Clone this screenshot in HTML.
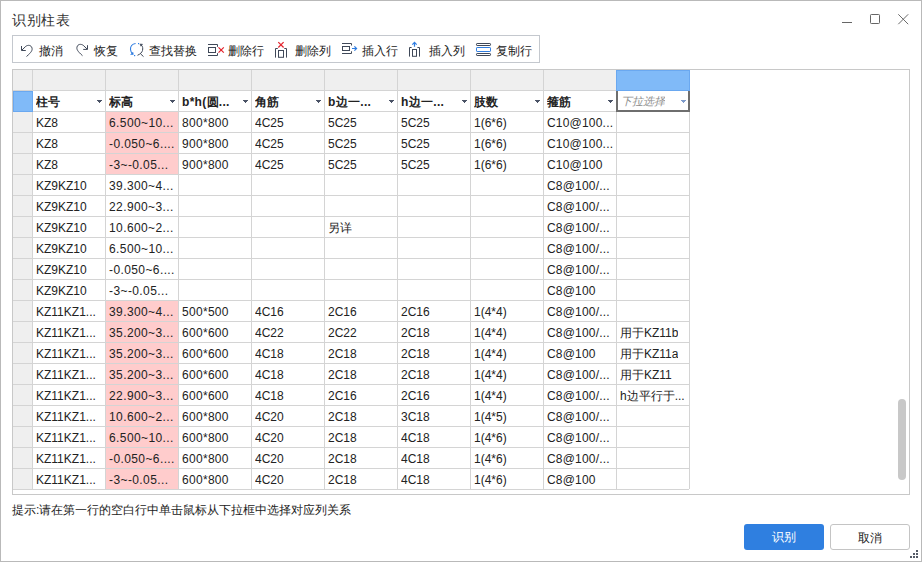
<!DOCTYPE html>
<html><head><meta charset="utf-8"><style>
*{margin:0;padding:0;box-sizing:border-box}
html,body{width:922px;height:562px;overflow:hidden;background:#fff}
body{position:relative;font-family:"Liberation Sans",sans-serif;color:#222;font-size:12px}
.a{position:absolute}
.win{position:absolute;left:0;top:0;width:922px;height:562px;border:1px solid #b9b9b9}
.title{position:absolute;left:12px;top:10.5px;font-size:13.5px;line-height:20px;color:#333;white-space:nowrap;letter-spacing:0.5px}
.tb{position:absolute;left:12px;top:35px;width:528px;height:28px;border:1px solid #c4c8ce}
.tt{position:absolute;top:43px;line-height:16px;font-size:12px;color:#222;white-space:nowrap}
.grid{position:absolute;left:12px;top:69px;width:898px;height:426px;border:1px solid #c8c8c8}
.hl{position:absolute;height:1px;background:#d4d4d4}
.vl{position:absolute;width:1px;background:#d4d4d4}
.c{position:absolute;white-space:nowrap;line-height:20px;height:20px;overflow:hidden}
.h{font-weight:bold;letter-spacing:0.3px}
.h .cj{font-weight:700}
.dd{position:absolute;width:0;height:0;border-left:2.5px solid transparent;border-right:2.5px solid transparent;border-top:3px solid #505a68}
.btn{position:absolute;top:524px;width:80px;height:26px;border-radius:3px;text-align:center;line-height:24px;font-size:12px}
</style></head><body>
<div class="win"></div>
<div class="title">识别柱表</div>

<svg class="a" style="left:0;top:0" width="922" height="40">
<rect x="842" y="22" width="10" height="1" fill="#666"/>
<rect x="870.5" y="14.5" width="9" height="9" rx="0.8" fill="none" stroke="#666" stroke-width="1"/>
<path d="M898.3,14.3 L908.2,24.2 M908.2,14.3 L898.3,24.2" stroke="#6a6a6a" stroke-width="1" fill="none"/>
</svg>

<div class="tb"></div>
<svg class="a" style="left:0;top:0" width="560" height="70" fill="none" stroke-width="1">
<g stroke="#3f4858">
<path d="M21.5,46 V50.5 H25.8 M21.8,50.2 L25.8,46.3 C28,44.7 31.2,45 32,48 C32.5,50 31.8,52 26.5,56.5"/>
<path d="M87.5,45.2 V49.4 H83.2 M87.2,49.1 L83.2,45.3 C81,43.7 77.8,44 77,47 C76.5,49 77.2,51 82.5,55.7"/>
</g>
<path d="M135.6,43.5 C132,44 130.3,46.8 130.5,49.5 C130.7,51.5 131.6,53 132.6,54" stroke="#2f7de1" stroke-width="1.1"/>
<path d="M130.6,54.5 L133.3,54.5 L133,52.2 Z" fill="#2f7de1" stroke="#2f7de1" stroke-width="0.5"/>
<rect x="138" y="43" width="1.2" height="1.2" fill="#2f7de1" stroke="none"/>
<rect x="134" y="55" width="1.2" height="1.2" fill="#2f7de1" stroke="none"/>
<path d="M141.2,45 C142.8,46.3 143,48.5 142.5,50.5 C142,52.3 140.5,54 137.5,55.3 M140.5,53.8 L143.5,56.6" stroke="#3f4858" stroke-width="1"/>
<path d="M140,44 L142.6,44.2 L140.8,46.2 Z" fill="#3f4858" stroke="#3f4858" stroke-width="0.5"/>
<g stroke="#3f4858">
<path d="M208,44.5 H217.5 V46.8 M208,55.5 H217.5 V53.2"/>
<rect x="208.5" y="47.5" width="7" height="5"/>
<path d="M275.5,57.6 V48.5 H277.8 M286.5,57.6 V48.5 H284.3"/>
<rect x="278.5" y="50.5" width="5" height="6.8"/>
<path d="M342,43.5 H351.5 V45.5 M342,53.5 H351.5 V51.3"/>
<rect x="342.5" y="46.5" width="7" height="4"/>
<path d="M409.5,56.6 V47.5 H411.6 M419.5,56.6 V47.5 H417.4"/>
<rect x="412.5" y="49.5" width="4" height="6.8"/>
<rect x="476.5" y="43.5" width="14" height="2" rx="0.6"/>
<rect x="476.5" y="53.5" width="14" height="2" rx="0.6"/>
</g>
<rect x="476.5" y="47.5" width="14" height="4" rx="0.6" stroke="#2f7de1"/>
<path d="M218.5,47.3 L223.8,52.6 M223.8,47.3 L218.5,52.6" stroke="#e3222c" stroke-width="1.2"/>
<path d="M278.3,42.2 L283.6,47.5 M283.6,42.2 L278.3,47.5" stroke="#e3222c" stroke-width="1.2"/>
<path d="M352,48.5 H356.5 M354.4,46.3 L356.6,48.5 L354.4,50.7" stroke="#2f7de1" stroke-width="1.2"/>
<path d="M414.5,42.5 V46.8 M412.3,44.6 L414.5,42.4 L416.7,44.6" stroke="#2f7de1" stroke-width="1.2"/>
</svg>

<div class="tt" style="left:39px">撤消</div>
<div class="tt" style="left:94px">恢复</div>
<div class="tt" style="left:149px">查找替换</div>
<div class="tt" style="left:228px">删除行</div>
<div class="tt" style="left:295px">删除列</div>
<div class="tt" style="left:362px">插入行</div>
<div class="tt" style="left:429px">插入列</div>
<div class="tt" style="left:496px">复制行</div>
<div class="grid"></div>
<div class="a" style="left:13px;top:70px;width:676px;height:20px;background:#efefef"></div>
<div class="a" style="left:13px;top:112px;width:19px;height:377px;background:#efefef"></div>
<div class="a" style="left:106px;top:112px;width:72px;height:20px;background:#ffcccc"></div>
<div class="a" style="left:106px;top:133px;width:72px;height:20px;background:#ffcccc"></div>
<div class="a" style="left:106px;top:154px;width:72px;height:20px;background:#ffcccc"></div>
<div class="a" style="left:106px;top:301px;width:72px;height:20px;background:#ffcccc"></div>
<div class="a" style="left:106px;top:322px;width:72px;height:20px;background:#ffcccc"></div>
<div class="a" style="left:106px;top:343px;width:72px;height:20px;background:#ffcccc"></div>
<div class="a" style="left:106px;top:364px;width:72px;height:20px;background:#ffcccc"></div>
<div class="a" style="left:106px;top:385px;width:72px;height:20px;background:#ffcccc"></div>
<div class="a" style="left:106px;top:406px;width:72px;height:20px;background:#ffcccc"></div>
<div class="a" style="left:106px;top:427px;width:72px;height:20px;background:#ffcccc"></div>
<div class="a" style="left:106px;top:448px;width:72px;height:20px;background:#ffcccc"></div>
<div class="a" style="left:106px;top:469px;width:72px;height:20px;background:#ffcccc"></div>
<div class="hl" style="left:13px;top:90px;width:676px"></div>
<div class="hl" style="left:13px;top:111px;width:676px"></div>
<div class="hl" style="left:13px;top:132px;width:676px"></div>
<div class="hl" style="left:13px;top:153px;width:676px"></div>
<div class="hl" style="left:13px;top:174px;width:676px"></div>
<div class="hl" style="left:13px;top:195px;width:676px"></div>
<div class="hl" style="left:13px;top:216px;width:676px"></div>
<div class="hl" style="left:13px;top:237px;width:676px"></div>
<div class="hl" style="left:13px;top:258px;width:676px"></div>
<div class="hl" style="left:13px;top:279px;width:676px"></div>
<div class="hl" style="left:13px;top:300px;width:676px"></div>
<div class="hl" style="left:13px;top:321px;width:676px"></div>
<div class="hl" style="left:13px;top:342px;width:676px"></div>
<div class="hl" style="left:13px;top:363px;width:676px"></div>
<div class="hl" style="left:13px;top:384px;width:676px"></div>
<div class="hl" style="left:13px;top:405px;width:676px"></div>
<div class="hl" style="left:13px;top:426px;width:676px"></div>
<div class="hl" style="left:13px;top:447px;width:676px"></div>
<div class="hl" style="left:13px;top:468px;width:676px"></div>
<div class="hl" style="left:13px;top:489px;width:676px"></div>
<div class="vl" style="left:32px;top:70px;height:419px"></div>
<div class="vl" style="left:105px;top:70px;height:419px"></div>
<div class="vl" style="left:178px;top:70px;height:419px"></div>
<div class="vl" style="left:251px;top:70px;height:419px"></div>
<div class="vl" style="left:324px;top:70px;height:419px"></div>
<div class="vl" style="left:397px;top:70px;height:419px"></div>
<div class="vl" style="left:470px;top:70px;height:419px"></div>
<div class="vl" style="left:543px;top:70px;height:419px"></div>
<div class="vl" style="left:616px;top:70px;height:419px"></div>
<div class="vl" style="left:689px;top:70px;height:419px"></div>
<div class="a" style="left:616px;top:70px;width:74px;height:21px;background:#80baf8;border:1px solid #6aa8f0"></div>
<div class="a" style="left:13px;top:91px;width:20px;height:21px;background:#80baf8;border:1px solid #6aa8f0"></div>
<div class="c h" style="left:36px;top:92px"><span class="cj">柱号</span></div>
<div class="a" style="left:97px;top:100px;width:5px;height:1px;background:#4a5366"></div><div class="a" style="left:98px;top:101px;width:3px;height:1px;background:#4a5366"></div><div class="a" style="left:99px;top:102px;width:1px;height:1px;background:#4a5366"></div>
<div class="c h" style="left:109px;top:92px"><span class="cj">标高</span></div>
<div class="a" style="left:170px;top:100px;width:5px;height:1px;background:#4a5366"></div><div class="a" style="left:171px;top:101px;width:3px;height:1px;background:#4a5366"></div><div class="a" style="left:172px;top:102px;width:1px;height:1px;background:#4a5366"></div>
<div class="c h" style="left:182px;top:92px">b*h(<span class="cj">圆</span>...</div>
<div class="a" style="left:243px;top:100px;width:5px;height:1px;background:#4a5366"></div><div class="a" style="left:244px;top:101px;width:3px;height:1px;background:#4a5366"></div><div class="a" style="left:245px;top:102px;width:1px;height:1px;background:#4a5366"></div>
<div class="c h" style="left:255px;top:92px"><span class="cj">角筋</span></div>
<div class="a" style="left:316px;top:100px;width:5px;height:1px;background:#4a5366"></div><div class="a" style="left:317px;top:101px;width:3px;height:1px;background:#4a5366"></div><div class="a" style="left:318px;top:102px;width:1px;height:1px;background:#4a5366"></div>
<div class="c h" style="left:328px;top:92px">b<span class="cj">边一</span>...</div>
<div class="a" style="left:389px;top:100px;width:5px;height:1px;background:#4a5366"></div><div class="a" style="left:390px;top:101px;width:3px;height:1px;background:#4a5366"></div><div class="a" style="left:391px;top:102px;width:1px;height:1px;background:#4a5366"></div>
<div class="c h" style="left:401px;top:92px">h<span class="cj">边一</span>...</div>
<div class="a" style="left:462px;top:100px;width:5px;height:1px;background:#4a5366"></div><div class="a" style="left:463px;top:101px;width:3px;height:1px;background:#4a5366"></div><div class="a" style="left:464px;top:102px;width:1px;height:1px;background:#4a5366"></div>
<div class="c h" style="left:474px;top:92px"><span class="cj">肢数</span></div>
<div class="a" style="left:535px;top:100px;width:5px;height:1px;background:#4a5366"></div><div class="a" style="left:536px;top:101px;width:3px;height:1px;background:#4a5366"></div><div class="a" style="left:537px;top:102px;width:1px;height:1px;background:#4a5366"></div>
<div class="c h" style="left:547px;top:92px"><span class="cj">箍筋</span></div>
<div class="a" style="left:608px;top:100px;width:5px;height:1px;background:#4a5366"></div><div class="a" style="left:609px;top:101px;width:3px;height:1px;background:#4a5366"></div><div class="a" style="left:610px;top:102px;width:1px;height:1px;background:#4a5366"></div>
<div class="a" style="left:616px;top:91px;width:74px;height:21px;border:2px solid #6e6e6e;border-top:none"></div>
<div class="c" style="left:621px;top:91px;font-style:italic;color:#8e8e8e;font-size:11px">下拉选择</div>
<div class="a" style="left:681px;top:100px;width:5px;height:1px;background:#7e9bcb"></div><div class="a" style="left:682px;top:101px;width:3px;height:1px;background:#7e9bcb"></div><div class="a" style="left:683px;top:102px;width:1px;height:1px;background:#7e9bcb"></div>
<div class="c" style="left:36px;top:113px;">KZ8</div>
<div class="c" style="left:109px;top:113px;letter-spacing:0.4px;">6.500~10...</div>
<div class="c" style="left:182px;top:113px;letter-spacing:0.3px;">800*800</div>
<div class="c" style="left:255px;top:113px;">4C25</div>
<div class="c" style="left:328px;top:113px;">5C25</div>
<div class="c" style="left:401px;top:113px;">5C25</div>
<div class="c" style="left:474px;top:113px;">1(6*6)</div>
<div class="c" style="left:547px;top:113px;letter-spacing:0.2px;">C10@100...</div>
<div class="c" style="left:36px;top:134px;">KZ8</div>
<div class="c" style="left:109px;top:134px;letter-spacing:0.4px;">-0.050~6....</div>
<div class="c" style="left:182px;top:134px;letter-spacing:0.3px;">900*800</div>
<div class="c" style="left:255px;top:134px;">4C25</div>
<div class="c" style="left:328px;top:134px;">5C25</div>
<div class="c" style="left:401px;top:134px;">5C25</div>
<div class="c" style="left:474px;top:134px;">1(6*6)</div>
<div class="c" style="left:547px;top:134px;letter-spacing:0.2px;">C10@100...</div>
<div class="c" style="left:36px;top:155px;">KZ8</div>
<div class="c" style="left:109px;top:155px;letter-spacing:0.4px;">-3~-0.05...</div>
<div class="c" style="left:182px;top:155px;letter-spacing:0.3px;">900*800</div>
<div class="c" style="left:255px;top:155px;">4C25</div>
<div class="c" style="left:328px;top:155px;">5C25</div>
<div class="c" style="left:401px;top:155px;">5C25</div>
<div class="c" style="left:474px;top:155px;">1(6*6)</div>
<div class="c" style="left:547px;top:155px;letter-spacing:0.2px;">C10@100</div>
<div class="c" style="left:36px;top:176px;">KZ9KZ10</div>
<div class="c" style="left:109px;top:176px;letter-spacing:0.4px;">39.300~4...</div>
<div class="c" style="left:547px;top:176px;letter-spacing:0.2px;">C8@100/...</div>
<div class="c" style="left:36px;top:197px;">KZ9KZ10</div>
<div class="c" style="left:109px;top:197px;letter-spacing:0.4px;">22.900~3...</div>
<div class="c" style="left:547px;top:197px;letter-spacing:0.2px;">C8@100/...</div>
<div class="c" style="left:36px;top:218px;">KZ9KZ10</div>
<div class="c" style="left:109px;top:218px;letter-spacing:0.4px;">10.600~2...</div>
<div class="c" style="left:328px;top:218px;"><span class="cj">另详</span></div>
<div class="c" style="left:547px;top:218px;letter-spacing:0.2px;">C8@100/...</div>
<div class="c" style="left:36px;top:239px;">KZ9KZ10</div>
<div class="c" style="left:109px;top:239px;letter-spacing:0.4px;">6.500~10...</div>
<div class="c" style="left:547px;top:239px;letter-spacing:0.2px;">C8@100/...</div>
<div class="c" style="left:36px;top:260px;">KZ9KZ10</div>
<div class="c" style="left:109px;top:260px;letter-spacing:0.4px;">-0.050~6....</div>
<div class="c" style="left:547px;top:260px;letter-spacing:0.2px;">C8@100/...</div>
<div class="c" style="left:36px;top:281px;">KZ9KZ10</div>
<div class="c" style="left:109px;top:281px;letter-spacing:0.4px;">-3~-0.05...</div>
<div class="c" style="left:547px;top:281px;letter-spacing:0.2px;">C8@100</div>
<div class="c" style="left:36px;top:302px;">KZ11KZ1...</div>
<div class="c" style="left:109px;top:302px;letter-spacing:0.4px;">39.300~4...</div>
<div class="c" style="left:182px;top:302px;letter-spacing:0.3px;">500*500</div>
<div class="c" style="left:255px;top:302px;">4C16</div>
<div class="c" style="left:328px;top:302px;">2C16</div>
<div class="c" style="left:401px;top:302px;">2C16</div>
<div class="c" style="left:474px;top:302px;">1(4*4)</div>
<div class="c" style="left:547px;top:302px;letter-spacing:0.2px;">C8@100/...</div>
<div class="c" style="left:36px;top:323px;">KZ11KZ1...</div>
<div class="c" style="left:109px;top:323px;letter-spacing:0.4px;">35.200~3...</div>
<div class="c" style="left:182px;top:323px;letter-spacing:0.3px;">600*600</div>
<div class="c" style="left:255px;top:323px;">4C22</div>
<div class="c" style="left:328px;top:323px;">2C22</div>
<div class="c" style="left:401px;top:323px;">2C18</div>
<div class="c" style="left:474px;top:323px;">1(4*4)</div>
<div class="c" style="left:547px;top:323px;letter-spacing:0.2px;">C8@100/...</div>
<div class="c" style="left:620px;top:323px;"><span class="cj">用于</span>KZ11b</div>
<div class="c" style="left:36px;top:344px;">KZ11KZ1...</div>
<div class="c" style="left:109px;top:344px;letter-spacing:0.4px;">35.200~3...</div>
<div class="c" style="left:182px;top:344px;letter-spacing:0.3px;">600*600</div>
<div class="c" style="left:255px;top:344px;">4C18</div>
<div class="c" style="left:328px;top:344px;">2C18</div>
<div class="c" style="left:401px;top:344px;">2C18</div>
<div class="c" style="left:474px;top:344px;">1(4*4)</div>
<div class="c" style="left:547px;top:344px;letter-spacing:0.2px;">C8@100</div>
<div class="c" style="left:620px;top:344px;"><span class="cj">用于</span>KZ11a</div>
<div class="c" style="left:36px;top:365px;">KZ11KZ1...</div>
<div class="c" style="left:109px;top:365px;letter-spacing:0.4px;">35.200~3...</div>
<div class="c" style="left:182px;top:365px;letter-spacing:0.3px;">600*600</div>
<div class="c" style="left:255px;top:365px;">4C18</div>
<div class="c" style="left:328px;top:365px;">2C18</div>
<div class="c" style="left:401px;top:365px;">2C18</div>
<div class="c" style="left:474px;top:365px;">1(4*4)</div>
<div class="c" style="left:547px;top:365px;letter-spacing:0.2px;">C8@100/...</div>
<div class="c" style="left:620px;top:365px;"><span class="cj">用于</span>KZ11</div>
<div class="c" style="left:36px;top:386px;">KZ11KZ1...</div>
<div class="c" style="left:109px;top:386px;letter-spacing:0.4px;">22.900~3...</div>
<div class="c" style="left:182px;top:386px;letter-spacing:0.3px;">600*600</div>
<div class="c" style="left:255px;top:386px;">4C18</div>
<div class="c" style="left:328px;top:386px;">2C16</div>
<div class="c" style="left:401px;top:386px;">2C16</div>
<div class="c" style="left:474px;top:386px;">1(4*4)</div>
<div class="c" style="left:547px;top:386px;letter-spacing:0.2px;">C8@100/...</div>
<div class="c" style="left:620px;top:386px;">h<span class="cj">边平行于</span>...</div>
<div class="c" style="left:36px;top:407px;">KZ11KZ1...</div>
<div class="c" style="left:109px;top:407px;letter-spacing:0.4px;">10.600~2...</div>
<div class="c" style="left:182px;top:407px;letter-spacing:0.3px;">600*800</div>
<div class="c" style="left:255px;top:407px;">4C20</div>
<div class="c" style="left:328px;top:407px;">2C18</div>
<div class="c" style="left:401px;top:407px;">3C18</div>
<div class="c" style="left:474px;top:407px;">1(4*5)</div>
<div class="c" style="left:547px;top:407px;letter-spacing:0.2px;">C8@100/...</div>
<div class="c" style="left:36px;top:428px;">KZ11KZ1...</div>
<div class="c" style="left:109px;top:428px;letter-spacing:0.4px;">6.500~10...</div>
<div class="c" style="left:182px;top:428px;letter-spacing:0.3px;">600*800</div>
<div class="c" style="left:255px;top:428px;">4C20</div>
<div class="c" style="left:328px;top:428px;">2C18</div>
<div class="c" style="left:401px;top:428px;">4C18</div>
<div class="c" style="left:474px;top:428px;">1(4*6)</div>
<div class="c" style="left:547px;top:428px;letter-spacing:0.2px;">C8@100/...</div>
<div class="c" style="left:36px;top:449px;">KZ11KZ1...</div>
<div class="c" style="left:109px;top:449px;letter-spacing:0.4px;">-0.050~6....</div>
<div class="c" style="left:182px;top:449px;letter-spacing:0.3px;">600*800</div>
<div class="c" style="left:255px;top:449px;">4C20</div>
<div class="c" style="left:328px;top:449px;">2C18</div>
<div class="c" style="left:401px;top:449px;">4C18</div>
<div class="c" style="left:474px;top:449px;">1(4*6)</div>
<div class="c" style="left:547px;top:449px;letter-spacing:0.2px;">C8@100/...</div>
<div class="c" style="left:36px;top:470px;">KZ11KZ1...</div>
<div class="c" style="left:109px;top:470px;letter-spacing:0.4px;">-3~-0.05...</div>
<div class="c" style="left:182px;top:470px;letter-spacing:0.3px;">600*800</div>
<div class="c" style="left:255px;top:470px;">4C20</div>
<div class="c" style="left:328px;top:470px;">2C18</div>
<div class="c" style="left:401px;top:470px;">4C18</div>
<div class="c" style="left:474px;top:470px;">1(4*6)</div>
<div class="c" style="left:547px;top:470px;letter-spacing:0.2px;">C8@100</div>
<div class="a" style="left:898px;top:399px;width:8px;height:81px;border-radius:4px;background:#c8c8c8"></div>
<div class="a" style="left:12px;top:502px;line-height:16px;white-space:nowrap;color:#222">提示:请在第一行的空白行中单击鼠标从下拉框中选择对应列关系</div>
<div class="btn" style="left:744px;background:#2f7fe0;color:#fff;line-height:24px;top:524px;padding-top:1px">识别</div>
<div class="btn" style="left:830px;border:1px solid #c4c4c4;color:#222;padding-top:1px">取消</div>
<svg class="a" style="left:900px;top:540px" width="22" height="22" fill="#555c68">
<rect x="16" y="10" width="2" height="2"/>
<rect x="13" y="13" width="2" height="2"/>
<rect x="16" y="13" width="2" height="2"/>
<rect x="10" y="16" width="2" height="2"/>
<rect x="13" y="16" width="2" height="2"/>
<rect x="16" y="16" width="2" height="2"/>
</svg>
</body></html>
